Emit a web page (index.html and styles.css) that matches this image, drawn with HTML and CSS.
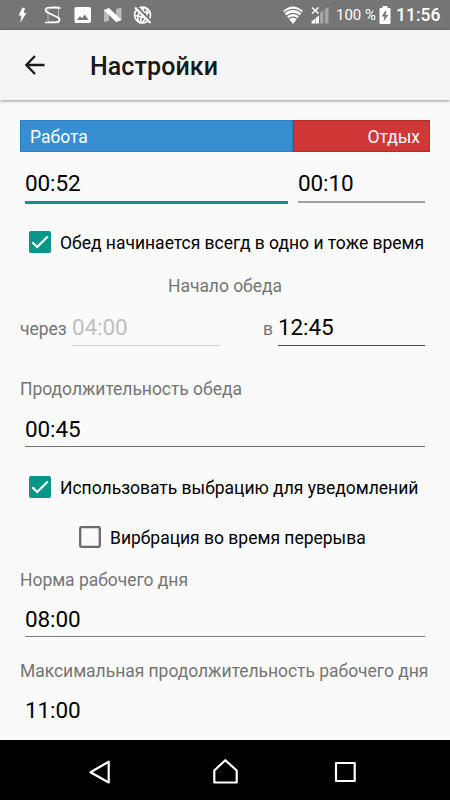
FILE: index.html
```html
<!DOCTYPE html>
<html lang="ru">
<head>
<meta charset="utf-8">
<title>Настройки</title>
<link rel="stylesheet" href="styles.css">
</head>
<body>
<div class="screen">
  <header class="status">
    <svg class="status-icons" width="156" height="30" viewBox="0 0 156 30">
      <path d="M22.5 7.5 18.6 15.5 21.3 15.6 20.4 22.8 26.4 13 23.6 12.8 25 8.2Z" fill="#fff"/>
      <path d="M48 8.500V21.500H58M49 8.500H58.500V21" fill="none" stroke="#c8c8c8" stroke-width=".8"/>
      <path d="M60.500 8.500C58 6.500 55 7.500 50 7.500C45 7.500 44.500 10.500 47.500 12.500L58 17.500C61 19.500 59.500 22.500 55.500 22.500H45" fill="none" stroke="#fff" stroke-width="1.700"/>
      <path fill-rule="evenodd" d="M76 7H89Q91 7 91 9V21Q91 23 89 23H76Q74.500 23 74.500 21V9Q74.500 7 76 7ZM77 20H88.500L84.800 14.500 82 18.200 80 16Z" fill="#fff"/>
      <path d="M104 10 109 8V21L104 22Z" fill="#bbb"/><path d="M116 9 121.500 7.500V20L116 22Z" fill="#bbb"/>
      <path d="M104 10 109 8 121.500 20 116 22Z" fill="#fff"/>
      <g fill="none" stroke="#fff" stroke-width="1.600"><circle cx="142.500" cy="15" r="8"/><ellipse cx="142.500" cy="15" rx="4" ry="8" transform="rotate(20 142.500 15)"/><path d="M136 10.500 150 13M134.500 15.500 149.500 18.500M144 7 140 23"/></g>
      <path d="M137 7 151 21" stroke="#757575" stroke-width="2"/><path d="M135 7.500 150.500 23" stroke="#fff" stroke-width="2"/>
    </svg>
    <div class="status-right">
      <svg width="49" height="30" viewBox="281 0 49 30">
        <path d="M283 11Q293 2 303 11L293 24Z" fill="#fff"/>
        <path d="M283.500 13Q293 5.500 302.500 13M286 16.200Q293 10.500 300 16.200M288 19.200Q293 15 298 19.200" fill="none" stroke="#757575" stroke-width="1.100"/>
        <path d="M312 7.500 318.500 13.500M318.500 7.500 312 13.500" stroke="#fff" stroke-width="1.500"/>
        <path d="M311.500 23.500V21.500L319 15.500V23.500Z" fill="#fff"/>
        <path d="M315.500 18V23.500" stroke="#a5a5a5" stroke-width=".8"/>
        <path d="M320 23.500V13L323.500 10V23.500ZM325 23.500V9.500L328.500 6.500V23.500Z" fill="#a5a5a5"/>
      </svg>
      <span class="percent">100 %</span>
      <svg class="battery" width="12" height="18" viewBox="0 0 12 18"><path d="M3.500 0H8.500V2H11Q11.500 2 11.500 3V17Q11.500 18 10.500 18H1.500Q.5 18 .5 17V3Q.5 2 1.500 2H3.500Z" fill="#fff"/><path d="M6.500 4.500 2.700 10.500H5.500L4.500 15.500 9.300 9H6.500L7.500 4.500Z" fill="#757575"/></svg>
      <span class="clock">11:56</span>
    </div>
  </header>

  <div class="toolbar">
    <svg class="back" width="20" height="20" viewBox="0 0 20 20"><path d="M19.500 10H1.500M10 1 1.300 10 10 19" fill="none" stroke="#181818" stroke-width="2.300"/></svg>
    <h1>Настройки</h1>
  </div>

  <main>
    <div class="ratio"><span class="work">Работа</span><span class="rest">Отдых</span></div>
    <div class="pair">
      <div class="field focused">00:52</div>
      <div class="field soft">00:10</div>
    </div>
    <div class="check first">
      <svg width="22" height="22" viewBox="0 0 22 22"><rect width="22" height="22" rx="2" fill="#089688"/><path d="M3.300 11.200 8.200 16 18.800 5.500" fill="none" stroke="#fff" stroke-width="2.300"/></svg>
      <span>Обед начинается всегд в одно и тоже время</span>
    </div>
    <div class="label center">Начало обеда</div>
    <div class="start">
      <span class="label">через</span><div class="field disabled">04:00</div>
      <span class="label at">в</span><div class="field">12:45</div>
    </div>
    <div class="label duration">Продолжительность обеда</div>
    <div class="field full lunch">00:45</div>
    <div class="check second">
      <svg width="22" height="22" viewBox="0 0 22 22"><rect width="22" height="22" rx="2" fill="#089688"/><path d="M3.300 11.200 8.200 16 18.800 5.500" fill="none" stroke="#fff" stroke-width="2.300"/></svg>
      <span>Использовать выбрацию для уведомлений</span>
    </div>
    <div class="check nested">
      <svg width="22" height="22" viewBox="0 0 22 22"><rect x="1.200" y="1.200" width="19.600" height="19.600" rx="1" fill="none" stroke="#6b6b6b" stroke-width="2.300"/></svg>
      <span>Вирбрация во время перерыва</span>
    </div>
    <div class="label norm">Норма рабочего дня</div>
    <div class="field full norm-time">08:00</div>
    <div class="label max">Максимальная продолжительность рабочего дня</div>
    <div class="field full last">11:00</div>
  </main>

  <nav>
    <svg width="450" height="60" viewBox="0 0 450 60" fill="none" stroke="#fff" stroke-width="2.200" stroke-linejoin="round">
      <path d="M108.700 21.700V42.500L90.500 32.200Z"/>
      <path d="M225.300 20.200 236.700 30.500V42.500H214.300V30.500Z"/>
      <path d="M336 23H354.700V41H336Z"/>
    </svg>
  </nav>
</div>
</body>
</html>
```

FILE: styles.css
```css
* { box-sizing: border-box; }
body { margin: 0; background: #fafafa; font-family: Roboto, sans-serif; color: #000; }
svg { display: block; flex: none; }
.screen { width: 450px; height: 800px; overflow: hidden; display: flex; flex-direction: column; white-space: nowrap; }

.status { height: 30px; flex: none; display: flex; justify-content: space-between; background: #757575; border-bottom: 1px solid #6c6c6c; color: #fff; }
.status-right { display: flex; line-height: 31px; width: 169px; }
.percent { font-size: 15px; width: 43px; margin-left: 6px; }
.battery { margin: 6px 5px 0 0; }
.clock { font-size: 17.5px; font-weight: 500; }

.toolbar { height: 70px; flex: none; display: flex; background: #f5f5f5; box-shadow: 0 1px 3px rgba(0,0,0,.4); }
.back { margin: 25px 0 0 25px; }
h1 { margin: 0 0 0 45px; font-size: 25px; font-weight: 500; line-height: 74px; letter-spacing: .08px; color: #181818; }

main { height: 640px; padding: 20px 20px 0; overflow: hidden; }
.ratio { display: flex; height: 32px; font-size: 17.5px; line-height: 35px; color: #fff; }
.work { width: 273px; padding-left: 10px; background: #378ed1; box-shadow: inset 0 0 0 1px #2b7ebf; }
.rest { flex: 1; padding-right: 10px; text-align: right; background: #d03737; box-shadow: inset 0 0 0 1px #b82828; }

.field { height: 38px; line-height: 39px; font-size: 22.5px; letter-spacing: -.1px; border-bottom: 1px solid #454545; }
.pair { display: flex; gap: 10px; margin: 12px 5px 0; align-items: flex-start; }
.pair .focused { width: 263px; height: 40px; border-bottom: 3px solid #159286; }
.soft { flex: 1; height: 39px; border-bottom: 2px solid #a0a0a0; }

.check { display: flex; height: 24px; line-height: 24px; font-size: 17.5px; letter-spacing: -.01px; padding-left: 9px; gap: 9px; }
.first { margin-top: 27px; line-height: 25px; }
.label { font-size: 17.5px; line-height: 24px; letter-spacing: -.04px; color: #757575; }
.center { margin-top: 19px; text-align: center; }
.start { display: flex; align-items: baseline; margin: 10px 5px 0 0; height: 38px; }
.start .field { width: 147px; }
.start .label { width: 52px; }
.start .at { width: 15px; margin-left: 44px; }
.start .disabled { color: #c0c0c0; border-color: #cecece; }
.duration { margin-top: 31px; }
.full { margin: 12px 5px 0; height: 34px; line-height: 33px; }
.lunch { border-color: #707070; }
.second { margin-top: 29px; }
.nested { margin: 26px 0 0 50px; }
.norm { margin-top: 18px; }
.norm-time { margin-top: 11px; border-color: #808080; }
.max { margin-top: 22px; }
.last { margin-top: 11px; border: 0; }

nav { height: 60px; flex: none; background: #000; }
```
